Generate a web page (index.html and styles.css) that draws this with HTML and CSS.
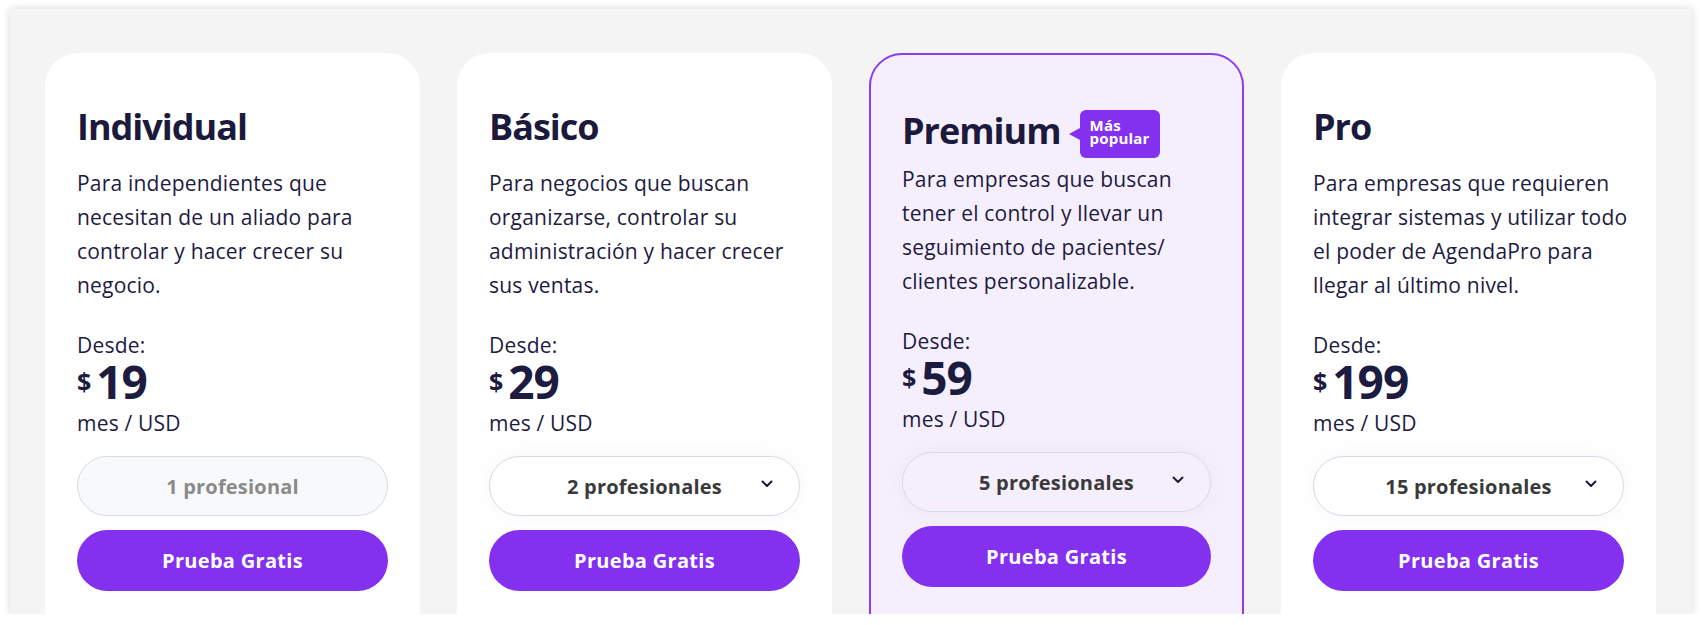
FILE: index.html
```html
<!DOCTYPE html>
<html lang="es">
<head>
<meta charset="utf-8">
<title>Planes</title>
<link rel="stylesheet" href="styles.css">
</head>
<body>
<div class="panel">
  <div class="cards">
    <div class="card">
      <h2 class="title">Individual</h2>
      <p class="desc">Para independientes que necesitan de un aliado para controlar y hacer crecer su negocio.</p>
      <div class="from">Desde:</div>
      <div class="price"><span class="cur">$</span><span class="amount">19</span></div>
      <div class="per">mes / USD</div>
      <div class="select disabled"><span>1 profesional</span></div>
      <button class="cta">Prueba Gratis</button>
    </div>
    <div class="card">
      <h2 class="title">Básico</h2>
      <p class="desc">Para negocios que buscan organizarse, controlar su administración y hacer crecer sus ventas.</p>
      <div class="from">Desde:</div>
      <div class="price"><span class="cur">$</span><span class="amount">29</span></div>
      <div class="per">mes / USD</div>
      <div class="select"><span>2 profesionales</span><svg class="chev" viewBox="0 0 12 8" width="12" height="8"><path d="M1.5 1.5l4.5 4.5 4.5-4.5" fill="none" stroke="#1d1b3f" stroke-width="2" stroke-linecap="round" stroke-linejoin="round"/></svg></div>
      <button class="cta">Prueba Gratis</button>
    </div>
    <div class="card featured">
      <div class="title-row">
        <h2 class="title">Premium</h2>
        <div class="badge">Más<br>popular</div>
      </div>
      <p class="desc">Para empresas que buscan tener el control y llevar un seguimiento de pacientes/ clientes personalizable.</p>
      <div class="from">Desde:</div>
      <div class="price"><span class="cur">$</span><span class="amount">59</span></div>
      <div class="per">mes / USD</div>
      <div class="select"><span>5 profesionales</span><svg class="chev" viewBox="0 0 12 8" width="12" height="8"><path d="M1.5 1.5l4.5 4.5 4.5-4.5" fill="none" stroke="#1d1b3f" stroke-width="2" stroke-linecap="round" stroke-linejoin="round"/></svg></div>
      <button class="cta">Prueba Gratis</button>
    </div>
    <div class="card">
      <h2 class="title">Pro</h2>
      <p class="desc">Para empresas que requieren integrar sistemas y utilizar todo el poder de AgendaPro para llegar al último nivel.</p>
      <div class="from">Desde:</div>
      <div class="price"><span class="cur">$</span><span class="amount">199</span></div>
      <div class="per">mes / USD</div>
      <div class="select"><span>15 profesionales</span><svg class="chev" viewBox="0 0 12 8" width="12" height="8"><path d="M1.5 1.5l4.5 4.5 4.5-4.5" fill="none" stroke="#1d1b3f" stroke-width="2" stroke-linecap="round" stroke-linejoin="round"/></svg></div>
      <button class="cta">Prueba Gratis</button>
    </div>
  </div>
</div>
</body>
</html>
```
FILE: styles.css
```css
* { box-sizing: border-box; }
html, body { margin: 0; padding: 0; background: #ffffff; }
body {
  font-family: "Open Sans", "Liberation Sans", sans-serif;
  color: #1d1b3f;
}
.panel {
  margin: 9px 10px 0;
  width: 1682px;
  height: 605px;
  background: #f4f4f4;
  box-shadow: 0 0 8px rgba(0, 0, 0, 0.16);
  overflow: hidden;
}
.cards {
  display: flex;
  align-items: flex-start;
  gap: 37px;
  padding: 44px 0 0 35px;
}
.card {
  width: 375px;
  height: 620px;
  flex: none;
  background: #ffffff;
  border-radius: 33px 33px 0 0;
  padding: 51px 32px 0;
  display: flex;
  flex-direction: column;
}
.card.featured {
  background: #f5effd;
  border: 2px solid #8a3cf0;
  padding: 53px 31px 0;
}
.title {
  margin: 0;
  font-size: 36px;
  line-height: 46px;
  font-weight: 700;
  letter-spacing: -1px;
  color: #1c1a3c;
}
.title-row {
  display: flex;
  align-items: flex-start;
  gap: 8px;
}
.badge {
  position: relative;
  margin-top: 2px;
  margin-left: 11px;
  width: 80px;
  height: 48px;
  padding: 9px 0 0 10px;
  background: #8430ef;
  color: #ffffff;
  border-radius: 6px;
  font-size: 15px;
  line-height: 13px;
  font-weight: 700;
  letter-spacing: 0.2px;
}
.badge::before {
  content: "";
  position: absolute;
  left: -11px;
  top: 18px;
  border-style: solid;
  border-width: 6px 11px 6px 0;
  border-color: transparent #8430ef transparent transparent;
}
.desc {
  margin: 16px -8px 0 0;
  font-size: 21px;
  line-height: 34px;
  letter-spacing: 0.2px;
}
.featured .desc { margin-top: 4px; }
.from {
  margin-top: 30px;
  font-size: 21px;
  line-height: 26px;
  letter-spacing: 0.2px;
}
.price {
  display: flex;
  align-items: center;
  gap: 5px;
}
.cur {
  font-size: 25px;
  font-weight: 700;
  line-height: 46px;
}
.amount {
  font-size: 46px;
  line-height: 46px;
  font-weight: 700;
  letter-spacing: -1px;
}
.per {
  margin-top: 6px;
  font-size: 21px;
  line-height: 26px;
  letter-spacing: 0.2px;
}
.select {
  position: relative;
  margin-top: 20px;
  height: 60px;
  border: 1px solid #d5dae6;
  border-radius: 30px;
  background: #ffffff;
  box-shadow: 0 0 24px rgba(0, 0, 0, 0.04);
  display: flex;
  align-items: center;
  justify-content: center;
  font-size: 20px;
  font-weight: 700;
  letter-spacing: 0.2px;
  color: #3a3a3a;
}
.featured .select { background: #f5effd; }
.select.disabled {
  background: #f8f9fb;
  color: #8a8a8a;
  box-shadow: none;
}
.chev {
  position: absolute;
  right: 26px;
  top: 23px;
}
.cta {
  margin-top: 14px;
  height: 61px;
  border: 0;
  border-radius: 31px;
  background: #8430ef;
  color: #ffffff;
  font-family: inherit;
  font-size: 20px;
  font-weight: 700;
  letter-spacing: 0.3px;
  cursor: pointer;
}
```
